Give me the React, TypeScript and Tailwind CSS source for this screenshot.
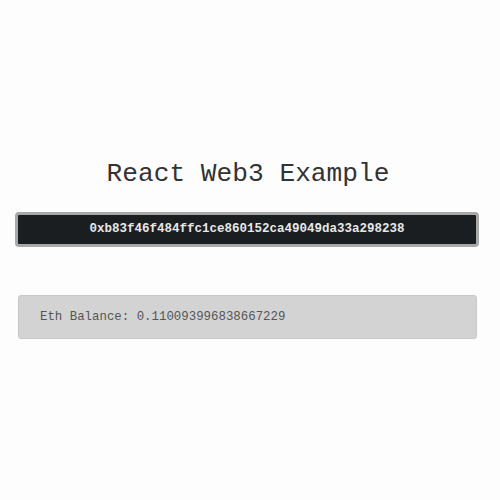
export default function App() {
  return (
    <div className="min-h-[500px] w-[500px] bg-[#fdfdfd] px-[15px] pt-[158px] font-['Liberation_Mono',monospace]">
      <h1 className="pr-[4px] text-center text-[26.2px] leading-[32px] text-[#333]">React Web3 Example</h1>

      <button className="mt-[22px] flex h-[35px] w-[464px] items-center justify-center rounded-[4px] border-[3px] border-[#a8a8a8] bg-[#1b1e21] text-[12.5px] font-bold text-[#e8e8e8]">
        0xb83f46f484ffc1ce860152ca49049da33a298238
      </button>

      <div className="ml-[3px] mt-[48px] flex h-[44px] w-[459px] items-center rounded-[3px] border border-[#c8c8c8] bg-[#d3d3d3] px-[21px] text-[12.4px] text-[#555]">
        Eth Balance: 0.110093996838667229
      </div>
    </div>
  );
}
